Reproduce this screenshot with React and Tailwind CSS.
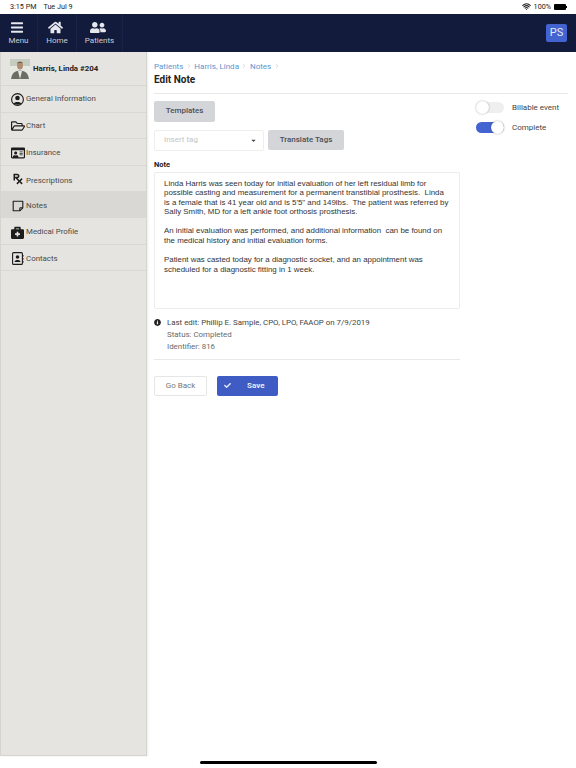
import { Wifi, ChevronRight } from "lucide-react";
import { FaHome, FaBars, FaUserFriends, FaRegFolderOpen, FaRegIdCard, FaPrescription, FaBriefcaseMedical, FaInfoCircle, FaCheck, FaCaretDown } from "react-icons/fa";

function RingUser() {
  return (
    <svg width="13" height="13" viewBox="0 0 13 13">
      <circle cx="6.5" cy="6.5" r="5.9" fill="none" stroke="#1c1c1c" strokeWidth="1.1" />
      <circle cx="6.5" cy="5" r="2.3" fill="#1c1c1c" />
      <path d="M2.6 10.6 C3.2 8.4 9.8 8.4 10.4 10.6 C9 12.2 4 12.2 2.6 10.6 Z" fill="#1c1c1c" />
    </svg>
  );
}

function NoteIcon() {
  return (
    <svg width="12" height="12" viewBox="0 0 12 12">
      <path d="M1.2 1.2 H10.8 V7.8 L7.8 10.8 H1.2 Z" fill="none" stroke="#1c1c1c" strokeWidth="1.1" strokeLinejoin="round" />
      <path d="M10.8 7.8 H7.8 V10.8" fill="none" stroke="#1c1c1c" strokeWidth="1" />
    </svg>
  );
}

function ContactIcon() {
  return (
    <svg width="12" height="13" viewBox="0 0 12 13">
      <rect x="0.6" y="0.6" width="9.8" height="11.8" rx="1" fill="none" stroke="#1c1c1c" strokeWidth="1.1" />
      <circle cx="5.5" cy="5" r="1.8" fill="#1c1c1c" />
      <path d="M2.5 10 C2.8 7.4 8.2 7.4 8.5 10 Z" fill="#1c1c1c" />
      <path d="M11 3 V4.6 M11 6 V7.6 M11 9 V10.6" stroke="#1c1c1c" strokeWidth="1" />
    </svg>
  );
}

const NAV = [
  { icon: <RingUser />, label: "General Information", h: "h-[27px]" },
  { icon: <FaRegFolderOpen size={14} />, label: "Chart", h: "h-[26px] pt-[1px]" },
  { icon: <FaRegIdCard size={14} />, label: "Insurance", h: "h-[27px] pt-[1px]" },
  { icon: <FaPrescription size={12} />, label: "Prescriptions", h: "h-[26px] pt-[1px]", lift: "pt-[3px]" },
  { icon: <NoteIcon />, label: "Notes", h: "h-[26px] pt-[2px]", active: true },
  { icon: <FaBriefcaseMedical size={13} />, label: "Medical Profile", h: "h-[27px] pt-[2px]" },
  { icon: <ContactIcon />, label: "Contacts", h: "h-[26px] pt-[2px]" },
];

function TopItem({ icon: Icon, label, size, width }) {
  return (
    <div className={`flex flex-col items-center border-r border-[#1a2346] pt-[6px] ${width}`}>
      <Icon size={size} className="mr-[4px] h-[15px] text-[#e6e8ee]" />
      <span className="text-[8px] leading-[11px] text-[#c9ccd6]">{label}</span>
    </div>
  );
}

function Toggle({ on }) {
  return (
    <div className={`relative h-[11px] w-[28px] shrink-0 rounded-full ${on ? "bg-[#4263d0]" : "bg-[#efefef]"}`}>
      <div className={`absolute top-[-1px] h-[13px] w-[13px] rounded-full bg-white shadow-[0_0_2px_rgba(0,0,0,0.35)] ${on ? "right-[0px]" : "left-[0px]"}`} />
    </div>
  );
}

function Avatar() {
  return (
    <svg width="20" height="20" viewBox="0 0 20 20" className="shrink-0">
      <rect width="20" height="20" fill="#e6e8e2" />
      <rect width="20" height="7" fill="#c5cdc0" />
      <path d="M1 20 C2 13 6 12 10 11.5 C14 12 18 13 19 20 Z" fill="#6b6f63" />
      <path d="M8 12 L10 20 L12 12 Z" fill="#e9e9e4" />
      <ellipse cx="10" cy="6.5" rx="3" ry="4" fill="#b08d70" />
      <path d="M7 5 C7 2 13 2 13 5 L12.5 4 L8 4 Z" fill="#6c5a48" />
    </svg>
  );
}

export default function App() {
  return (
    <div className="relative flex h-[768px] w-[576px] flex-col overflow-hidden bg-white font-['Roboto',sans-serif]">
      {/* status bar */}
      <div className="flex h-[14px] shrink-0 items-center justify-between pl-[10px] pr-[9px] text-[7.2px] text-[#222]">
        <div className="flex gap-[7px]">
          <span>3:15 PM</span>
          <span>Tue Jul 9</span>
        </div>
        <div className="flex items-center gap-[3px]">
          <Wifi size={9} strokeWidth={3} />
          <span>100%</span>
          <div className="flex items-center">
            <div className="h-[6px] w-[12px] rounded-[1px] bg-black" />
            <div className="h-[2px] w-[1px] bg-black" />
          </div>
        </div>
      </div>

      {/* header */}
      <div className="flex h-[38px] shrink-0 items-stretch justify-between bg-[#121b3b]">
        <div className="flex">
          <TopItem icon={FaBars} label="Menu" size={12} width="w-[38px]" />
          <TopItem icon={FaHome} label="Home" size={15} width="w-[39px]" />
          <TopItem icon={FaUserFriends} label="Patients" size={16} width="w-[46px]" />
        </div>
        <div className="flex items-center">
          <div className="mr-[9px] flex h-[18px] w-[21px] items-center justify-center rounded-[2px] bg-[#4263d0] text-[11px] text-[#e6e9f5]">PS</div>
        </div>
      </div>

      <div className="flex min-h-0 flex-1 pb-[12px]">
        {/* sidebar */}
        <div className="w-[147px] shrink-0 border-x border-b border-[#d5d4cf] bg-[#e5e4e0] shadow-[1px_0_2px_rgba(0,0,0,0.08)]">
          <div className="flex h-[34px] items-center gap-[3px] border-b border-[#d8d7d3] pl-[9px]">
            <Avatar />
            <span className="text-[7.9px] font-bold text-[#222]">Harris, Linda #204</span>
          </div>
          {NAV.map((n) => (
            <div
              key={n.label}
              className={`flex items-center border-b border-[#d9d8d4] pl-[9px] ${n.h} ${n.active ? "bg-[#d9d8d4]" : ""}`}
            >
              <span className="flex w-[15px] justify-center text-[#1c1c1c]">{n.icon}</span>
              <span className={`ml-[1px] text-[7.9px] text-[#4a4a48] ${n.lift || ""}`}>{n.label}</span>
            </div>
          ))}
        </div>

        {/* main */}
        <div className="flex min-w-0 flex-1 flex-col pl-[7px] pr-[8px] pt-[8px]">
          <div className="flex items-center gap-[2.5px] pt-[0.5px] text-[8px] leading-[11px] text-[#5b95cf]">
            <span>Patients</span>
            <ChevronRight size={6} className="text-[#aaa]" />
            <span>Harris, Linda</span>
            <ChevronRight size={6} className="text-[#aaa]" />
            <span>Notes</span>
            <ChevronRight size={6} className="text-[#aaa]" />
          </div>
          <h1 className="mt-[1px] text-[10px] font-bold leading-[14px] text-[#222]">Edit Note</h1>
          <div className="mt-[6px] h-px bg-[#e8e8e8]" />

          <div className="mt-[7px] flex gap-[16px]">
            <div className="w-[306px] shrink-0">
              <button className="block h-[21px] w-[61px] rounded-[2px] bg-[#d3d5d9] text-[8px] font-medium text-[#4b4f55]">Templates</button>
              <div className="mt-[8px] flex items-start gap-[4px]">
                <div className="flex h-[21px] w-[110px] items-center justify-between rounded-[2px] border border-[#eeeeee] pl-[9px] pr-[6px] text-[8px] text-[#c4c4c4]">
                  <span>Insert tag</span>
                  <FaCaretDown size={7} className="text-[#444]" />
                </div>
                <button className="h-[20px] w-[76px] rounded-[2px] bg-[#d3d5d9] text-[8px] font-medium text-[#4b4f55]">Translate Tags</button>
              </div>
              <div className="mt-[9px] text-[7.5px] font-bold leading-[10px] text-[#222]">Note</div>
              <div className="mt-[2px] h-[137px] whitespace-pre-wrap rounded-[2px] border border-[#ececec] pl-[9px] pr-[3px] pt-[6px] font-['Liberation_Sans',sans-serif] text-[7.9px] leading-[9.6px] text-[#333]">
                {"Linda Harris was seen today for initial evaluation of her left residual limb for\npossible casting and measurement for a permanent transtibial prosthesis.  Linda\nis a female that is 41 year old and is 5'5\" and 149lbs.  The patient was referred by\nSally Smith, MD for a left ankle foot orthosis prosthesis.\n\nAn initial evaluation was performed, and additional information  can be found on\nthe medical history and initial evaluation forms.\n\nPatient was casted today for a diagnostic socket, and an appointment was\nscheduled for a diagnostic fitting in 1 week."}
              </div>
              <div className="mt-[8px] flex">
                <FaInfoCircle size={7} className="mt-[2.5px] text-[#222]" />
                <div className="ml-[6px] text-[7.9px] leading-[12px] text-[#6a6a6a]">
                  <div className="text-[#444]">Last edit: Phillip E. Sample, CPO, LPO, FAAOP on 7/9/2019</div>
                  <div>Status: Completed</div>
                  <div>Identifier: 816</div>
                </div>
              </div>
              <div className="mt-[6px] h-px bg-[#e8e8e8]" />
              <div className="mt-[16px] flex gap-[10px]">
                <button className="h-[20px] w-[53px] rounded-[2px] border border-[#e6e6e6] text-[8px] text-[#777]">Go Back</button>
                <button className="flex h-[20px] w-[61px] items-center rounded-[2px] bg-[#3f5bc4] pl-[7px] text-[8px] font-bold text-[#e6e9f5]">
                  <FaCheck size={7} />
                  <span className="ml-[16px]">Save</span>
                </button>
              </div>
            </div>

            <div className="pt-[1px]">
              <div className="flex items-center gap-[8px] pb-[9px]">
                <Toggle />
                <span className="whitespace-nowrap text-[8px] leading-[11px] text-[#444]">Billable event</span>
              </div>
              <div className="flex items-center gap-[8px]">
                <Toggle on />
                <span className="text-[8px] leading-[11px] text-[#444]">Complete</span>
              </div>
            </div>
          </div>
        </div>
      </div>

      {/* home indicator */}
      <div className="absolute left-[200px] top-[761px] h-[3px] w-[177px] rounded-full bg-black" />
    </div>
  );
}
